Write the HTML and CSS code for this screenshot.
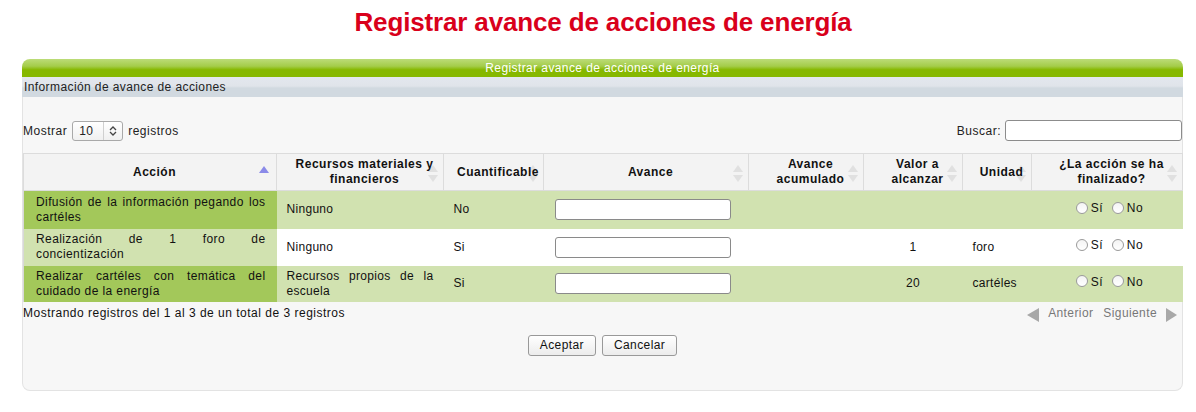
FILE: index.html
```html
<!DOCTYPE html>
<html lang="es">
<head>
<meta charset="utf-8">
<title>Registrar avance de acciones de energía</title>
<link rel="stylesheet" href="styles.css">
</head>
<body>
<h1 class="page-title">Registrar avance de acciones de energía</h1>
<div class="panel">
  <div class="panel-head">Registrar avance de acciones de energía</div>
  <div class="panel-sub">Información de avance de acciones</div>
  <div class="panel-body">
    <div class="dt-top">
      <label class="dt-length">Mostrar
        <span class="fake-select">10<span class="sel-arrows"><svg width="8" height="10" viewBox="0 0 8 10"><path d="M1 4 L4 1 L7 4 M1 6 L4 9 L7 6" fill="none" stroke="#444" stroke-width="1.3"/></svg></span></span>
        registros</label>
      <label class="dt-filter">Buscar: <input type="text" class="search"></label>
    </div>
    <table class="grid">
      <colgroup>
        <col style="width:253px"><col style="width:167px"><col style="width:100px"><col style="width:205px"><col style="width:115px"><col style="width:99px"><col style="width:69px"><col style="width:151px">
      </colgroup>
      <thead>
        <tr>
          <th class="sorted">Acción<span class="sort-up"></span></th>
          <th>Recursos materiales y financieros<span class="sort-both"></span></th>
          <th>Cuantificable<span class="sort-both"></span></th>
          <th>Avance<span class="sort-both"></span></th>
          <th>Avance acumulado<span class="sort-both"></span></th>
          <th>Valor a alcanzar<span class="sort-both"></span></th>
          <th>Unidad<span class="sort-both"></span></th>
          <th>¿La acción se ha finalizado?<span class="sort-both"></span></th>
        </tr>
      </thead>
      <tbody>
        <tr class="odd">
          <td class="just first">Difusión de la información pegando los cartéles</td>
          <td class="just">Ninguno</td>
          <td>No</td>
          <td class="c-input"><input type="text" class="adv"></td>
          <td></td>
          <td class="center"></td>
          <td></td>
          <td class="center"><label class="rad"><span class="radio"></span>Sí</label> <label class="rad"><span class="radio"></span>No</label></td>
        </tr>
        <tr class="even">
          <td class="just first">Realización de 1 foro de concientización</td>
          <td class="just">Ninguno</td>
          <td>Si</td>
          <td class="c-input"><input type="text" class="adv"></td>
          <td></td>
          <td class="center">1</td>
          <td>foro</td>
          <td class="center"><label class="rad"><span class="radio"></span>Sí</label> <label class="rad"><span class="radio"></span>No</label></td>
        </tr>
        <tr class="odd">
          <td class="just first">Realizar cartéles con temática del cuidado de la energía</td>
          <td class="just">Recursos propios de la escuela</td>
          <td>Si</td>
          <td class="c-input"><input type="text" class="adv"></td>
          <td></td>
          <td class="center">20</td>
          <td>cartéles</td>
          <td class="center"><label class="rad"><span class="radio"></span>Sí</label> <label class="rad"><span class="radio"></span>No</label></td>
        </tr>
      </tbody>
    </table>
    <div class="dt-bottom">
      <div class="dt-info">Mostrando registros del 1 al 3 de un total de 3 registros</div>
      <div class="dt-paginate">
        <span class="tri-left"></span><span class="pg">Anterior</span><span class="pg">Siguiente</span><span class="tri-right"></span>
      </div>
    </div>
    <div class="actions">
      <button class="btn">Aceptar</button>
      <button class="btn">Cancelar</button>
    </div>
  </div>
</div>
</body>
</html>
```
FILE: styles.css
```css
html, body {
  margin: 0;
  padding: 0;
  background: #fff;
  font-family: "Liberation Sans", Arial, sans-serif;
  font-size: 12px;
  color: #222;
}
.page-title {
  margin: 0;
  padding: 8px 0 0 10px;
  height: 59px;
  box-sizing: border-box;
  text-align: center;
  font-size: 26px;
  line-height: 28px;
  font-weight: bold;
  letter-spacing: -0.15px;
  color: #d9001b;
}
.panel {
  margin-left: 22px;
  width: 1161px;
}
.panel-head {
  height: 18px;
  line-height: 19px;
  border-radius: 8px 8px 0 0;
  background: linear-gradient(#bcdc78 0%, #a4cc4a 40%, #86b800 60%, #86b800 100%);
  color: #fff;
  text-align: center;
  font-size: 12px;
  letter-spacing: 0.4px;
}
.panel-sub {
  height: 20px;
  line-height: 20px;
  padding-left: 2px;
  background: linear-gradient(#e3e7ee 0%, #e0e4ea 45%, #d1d9e0 55%, #d1d9e0 100%);
  color: #222;
  letter-spacing: 0.4px;
}
.panel-body {
  background: #f7f7f7;
  border: 1px solid #e3e3e3;
  border-top: none;
  border-radius: 0 0 8px 8px;
  height: 294px;
  box-sizing: border-box;
  padding: 23px 0 0 0;
}
.dt-top {
  display: flex;
  justify-content: space-between;
  align-items: center;
  height: 21px;
  padding: 0;
  margin-bottom: 12px;
  letter-spacing: 0.5px;
}
.dt-length {
  display: flex;
  align-items: center;
  gap: 4px;
}
.fake-select {
  display: inline-flex;
  align-items: center;
  justify-content: space-between;
  box-sizing: border-box;
  width: 51px;
  height: 20px;
  border: 1px solid #a9a9a9;
  border-radius: 3px;
  background: linear-gradient(#ffffff, #f0f0f0);
  padding-left: 6px;
  margin: 0 1px;
  letter-spacing: 0.3px;
}
.sel-arrows {
  display: flex;
  align-items: center;
  justify-content: center;
  width: 18px;
  height: 18px;
  border-left: 1px solid #d0d0d0;
}
.dt-filter {
  display: flex;
  align-items: center;
  gap: 4px;
}
.search {
  box-sizing: border-box;
  width: 177px;
  height: 21px;
  border: 1px solid #8c8c8c;
  border-radius: 3px;
  background: #fff;
  margin: 0;
}
.grid {
  margin-left: 0;
  width: 1160px;
  border-collapse: collapse;
  table-layout: fixed;
  border-left: 1px solid #d8d8d8;
}
.grid th {
  position: relative;
  z-index: 0;
  height: 37px;
  box-sizing: border-box;
  background: #f3f3f3;
  border: 1px solid #dcdcdc;
  font-size: 12px;
  font-weight: bold;
  line-height: 15px;
  color: #111;
  padding: 3px 4px 3px 13px;
  letter-spacing: 0.5px;
  text-align: center;
}
.sort-up {
  position: absolute;
  z-index: -1;
  right: 7px;
  top: 12px;
  width: 0;
  height: 0;
  border-left: 5px solid transparent;
  border-right: 5px solid transparent;
  border-bottom: 7px solid #8a8ae8;
}
.sort-both {
  position: absolute;
  z-index: -1;
  right: 5px;
  top: 11px;
  width: 10px;
  height: 17px;
}
.sort-both::before, .sort-both::after {
  content: "";
  position: absolute;
  left: 0;
  width: 0;
  height: 0;
  border-left: 5px solid transparent;
  border-right: 5px solid transparent;
}
.sort-both::before {
  top: 0;
  border-bottom: 7px solid #e0e0e0;
}
.sort-both::after {
  bottom: 0;
  border-top: 7px solid #e0e0e0;
}
.grid td {
  height: 37px;
  box-sizing: border-box;
  padding: 3px 10px;
  font-size: 12px;
  line-height: 15px;
  color: #111;
  letter-spacing: 0.3px;
  vertical-align: middle;
}
.grid td.first {
  padding: 3px 11px 3px 12px;
  letter-spacing: 0.4px;
}
.grid td.just {
  text-align: justify;
}
.grid td.center {
  text-align: center;
}
.grid tr.odd td { background: #d1e2b0; }
.grid tr.even td { background: #ffffff; }
.grid tr.odd td.first { background: #a3c85a; }
.grid tr.even td.first { background: #d1e2b0; }
.grid tbody tr:first-child td { height: 38px; }
.grid tbody tr:last-child td { height: 36px; }
.c-input {
  padding-left: 11px !important;
}
.adv {
  display: block;
  box-sizing: border-box;
  width: 176px;
  height: 21px;
  margin: 0;
  border: 1px solid #8a8a8a;
  border-radius: 3px;
  background: #fff;
}
.rad {
  display: inline-flex;
  align-items: center;
  letter-spacing: 0.5px;
}
.radio {
  display: inline-block;
  width: 12px;
  height: 12px;
  box-sizing: border-box;
  border: 1px solid #9a9a9a;
  border-radius: 50%;
  background: linear-gradient(#f4f4f4, #ffffff);
  margin: 0 3px 0 5px;
  position: relative;
  top: -1px;
}
.dt-bottom {
  display: flex;
  justify-content: space-between;
  align-items: flex-start;
  padding-top: 4px;
  height: 29px;
  box-sizing: border-box;
}
.dt-info {
  letter-spacing: 0.5px;
  color: #111;
}
.dt-paginate {
  display: flex;
  align-items: center;
  gap: 0;
  color: #777;
  padding-right: 5px;
  letter-spacing: 0.4px;
  margin-top: -2px;
}
.pg {
  margin: 0 5px;
}
.tri-left, .tri-right {
  width: 0;
  height: 0;
  border-top: 7px solid transparent;
  border-bottom: 7px solid transparent;
  margin-top: 4px;
}
.tri-left {
  border-right: 12px solid #a8a8a8;
  margin-right: 4px;
}
.tri-right {
  border-left: 11px solid #a8a8a8;
  margin-left: 4px;
}
.actions {
  display: flex;
  justify-content: center;
  gap: 6px;
  margin-top: 4px;
}
.btn {
  height: 21px;
  padding: 0 11px;
  font-family: "Liberation Sans", Arial, sans-serif;
  font-size: 12px;
  letter-spacing: 0.4px;
  color: #111;
  border: 1px solid #999;
  border-radius: 3px;
  background: linear-gradient(#ffffff, #ececec);
}
```
